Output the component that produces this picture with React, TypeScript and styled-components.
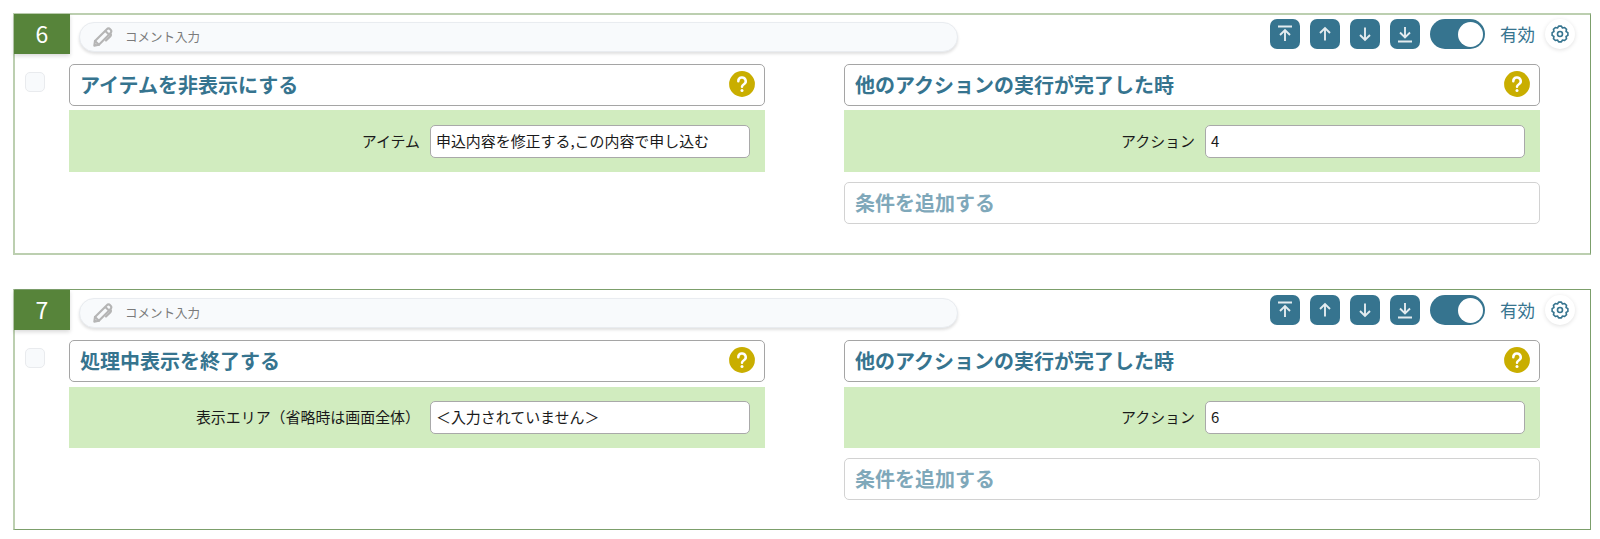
import React from "react";
import styled, { createGlobalStyle } from "styled-components";

const Global = createGlobalStyle`
  * { box-sizing: border-box; }
  body { margin: 0; background: #fff; font-family: "Noto Sans CJK JP", sans-serif; color: #1a1a1a; }
`;

const Page = styled.main`
  width: 1600px;
  height: 539px;
  overflow: hidden;
  padding: 13px 0 0 13px;
  display: flex;
  flex-direction: column;
  gap: 34px;
`;

const Card = styled.section<{ $soft: boolean }>`
  width: 1578px;
  height: ${(p) => (p.$soft ? 242 : 241)}px;
  flex: none;
  border-style: solid;
  border-color: ${(p) => (p.$soft ? "#bccfb0 #7c9f6b #bccfb0 #bccfb0" : "#7c9f6b #7c9f6b #7c9f6b #bccfb0")};
  border-width: ${(p) => (p.$soft ? "2px 1px 2px 2px" : "1px 1px 1px 2px")};
`;

const Header = styled.header<{ $soft: boolean }>`
  height: ${(p) => (p.$soft ? 49 : 50)}px;
  display: flex;
  align-items: flex-start;
`;

const Badge = styled.div<{ $soft: boolean }>`
  width: 56px;
  height: 40px;
  margin: ${(p) => (p.$soft ? "-1px 9px 0 -1px" : "0 9px 0 -1px")};
  background: #57843a;
  color: #fff;
  font-size: 23px;
  line-height: 39px;
  text-align: center;
  box-shadow: 0 2px 4px rgba(0, 0, 0, 0.15);
`;

const Comment = styled.div<{ $soft: boolean }>`
  width: 879px;
  height: 30px;
  margin-top: ${(p) => (p.$soft ? 7 : 8)}px;
  border-radius: 15px;
  border: 1px solid #e9ecf0;
  background: #f8fafc;
  box-shadow: 0 2px 3px rgba(0, 0, 0, 0.12);
  display: flex;
  align-items: center;
  padding-left: 13px;
  gap: 12px;
  color: #7b7b7b;
  font-size: 12.5px;
  line-height: 28px;
`;

const Controls = styled.div<{ $soft: boolean }>`
  margin: ${(p) => (p.$soft ? 4 : 5)}px 15px 0 auto;
  height: 30px;
  display: flex;
  align-items: center;
  gap: 10px;
`;

const MoveButton = styled.button`
  width: 30px;
  height: 30px;
  padding: 0;
  border: 0;
  border-radius: 7px;
  background: #36748f;
  display: grid;
  place-items: center;
`;

const Toggle = styled.div`
  width: 55px;
  height: 30px;
  border-radius: 15px;
  background: #36748f;
  display: flex;
  align-items: center;
  justify-content: flex-end;
  padding-right: 2px;
`;

const Knob = styled.span`
  width: 25px;
  height: 25px;
  border-radius: 50%;
  background: #fff;
`;

const State = styled.span`
  width: 40px;
  padding-left: 5px;
  font-size: 17.5px;
  line-height: 32px;
  color: #36748f;
  white-space: nowrap;
`;

const Gear = styled.button`
  width: 30px;
  height: 30px;
  padding: 0;
  border: 0;
  border-radius: 50%;
  background: #fff;
  box-shadow: 0 1px 4px rgba(0, 0, 0, 0.12);
  display: grid;
  place-items: center;
`;

const Body = styled.div`
  display: flex;
  align-items: flex-start;
`;

const Check = styled.div`
  width: 20px;
  height: 20px;
  flex: none;
  margin: 8px 24px 0 10px;
  border: 1px solid #e9ebee;
  border-radius: 5px;
  background: #f8fafc;
`;

const Column = styled.div`
  width: 696px;
  flex: none;
  margin-right: 79px;
  display: flex;
  flex-direction: column;

  &:last-child {
    margin-right: 0;
  }
`;

const Title = styled.div`
  height: 42px;
  border: 1px solid #a5a5a5;
  border-radius: 5px;
  padding: 0 9px 0 10px;
  display: flex;
  align-items: center;
  justify-content: space-between;
  color: #36748f;
  font-size: 20px;
  font-weight: 700;
  line-height: 40px;

  svg {
    margin-bottom: 2px;
  }
`;

const AddTitle = styled(Title)`
  margin-top: 10px;
  border-color: #d2d2d2;
  color: #7fa8ba;
`;

const Params = styled.div<{ $soft: boolean }>`
  height: ${(p) => (p.$soft ? 62 : 61)}px;
  margin-top: ${(p) => (p.$soft ? 4 : 5)}px;
  padding: ${(p) => (p.$soft ? "1px" : "0")} 15px 0;
  background: #d1ecbf;
  display: flex;
  align-items: center;
  justify-content: flex-end;
  gap: 10px;
  font-size: 14.95px;
`;

const Label = styled.span`
  line-height: 31px;
  margin-bottom: 2px;
`;

const Field = styled.div`
  width: 320px;
  height: 33px;
  border: 1px solid #a9a9a9;
  border-radius: 5px;
  background: #fff;
  padding-left: 5px;
  line-height: 30px;
  white-space: nowrap;
`;

const Pencil = () => (
  <svg width="20" height="20" viewBox="0 0 20 20" fill="none" stroke="#b5b5b5" strokeWidth="2.1" strokeLinejoin="round" strokeLinecap="round">
    <path d="M1.300 18.600 2 14 13.600 2.400a2.600 2.600 0 0 1 3.800 3.800L5.900 17.700z" />
    <path d="M12.600 4.200l3.400 3.400M2 14l3.900 3.700M17.200 6.600q1.500 1.200.2 2.600L13 13.600" />
  </svg>
);

const arrows = {
  top: "M4 3.500h14M11 18V7.500M6 12l5-5 5 5",
  up: "M11 17.500V5M6 10l5-5 5 5",
  down: "M11 4.500V17M6 12l5 5 5-5",
  bottom: "M4 18.500h14M11 4V14M6 9.500l5 5 5-5",
};

const Arrow = ({ kind }: { kind: keyof typeof arrows }) => (
  <svg width="22" height="22" viewBox="0 0 22 22" fill="none" stroke="#e3ebef" strokeWidth="1.9">
    <path d={arrows[kind]} />
  </svg>
);

// Eight teeth, each a flat outer edge joined to the next by a shallow notch.
const gearPoints = Array.from({ length: 8 }, (_, i) =>
  [[-10, 8], [10, 8], [22.5, 6.5]].map(([offset, radius]) => {
    const angle = ((i * 45 + offset) * Math.PI) / 180;
    return `${(9 + radius * Math.cos(angle)).toFixed(2)},${(9 + radius * Math.sin(angle)).toFixed(2)}`;
  }).join(" ")
).join(" ");

const GearIcon = () => (
  <svg width="18" height="18" viewBox="0 0 18 18" fill="none" stroke="#36748f" strokeWidth="1.600" strokeLinejoin="round">
    <polygon points={gearPoints} />
    <circle cx="9" cy="9" r="2.500" />
  </svg>
);

const Help = () => (
  <svg width="26" height="26" viewBox="0 0 26 26" fill="none">
    <circle cx="13" cy="13" r="12.900" fill="#c9ae00" />
    <path d="M9.300 10.200a3.700 3.700 0 1 1 5.600 3.100c-1.400.9-1.900 1.300-1.900 2.400" stroke="#fff" strokeWidth="2.500" strokeLinecap="round" />
    <circle cx="13" cy="19.400" r="1.500" fill="#fff" />
  </svg>
);

interface RuleProps {
  no: number;
  soft: boolean;
  action: string;
  label: string;
  value: string;
  trigger: string;
}

const Rule = ({ no, soft, action, label, value, trigger }: RuleProps) => (
  <Card $soft={soft}>
    <Header $soft={soft}>
      <Badge $soft={soft}>{no}</Badge>
      <Comment $soft={soft}>
        <Pencil />
        <span>コメント入力</span>
      </Comment>
      <Controls $soft={soft}>
        <MoveButton><Arrow kind="top" /></MoveButton>
        <MoveButton><Arrow kind="up" /></MoveButton>
        <MoveButton><Arrow kind="down" /></MoveButton>
        <MoveButton><Arrow kind="bottom" /></MoveButton>
        <Toggle><Knob /></Toggle>
        <State>有効</State>
        <Gear><GearIcon /></Gear>
      </Controls>
    </Header>
    <Body>
      <Check />
      <Column>
        <Title>{action}<Help /></Title>
        <Params $soft={soft}>
          <Label>{label}</Label>
          <Field>{value}</Field>
        </Params>
      </Column>
      <Column>
        <Title>他のアクションの実行が完了した時<Help /></Title>
        <Params $soft={soft}>
          <Label>アクション</Label>
          <Field>{trigger}</Field>
        </Params>
        <AddTitle>条件を追加する</AddTitle>
      </Column>
    </Body>
  </Card>
);

export default function App() {
  return (
    <>
      <Global />
      <Page>
        <Rule no={6} soft action="アイテムを非表示にする" label="アイテム" value="申込内容を修正する,この内容で申し込む" trigger="4" />
        <Rule no={7} soft={false} action="処理中表示を終了する" label="表示エリア（省略時は画面全体）" value="＜入力されていません＞" trigger="6" />
      </Page>
    </>
  );
}
